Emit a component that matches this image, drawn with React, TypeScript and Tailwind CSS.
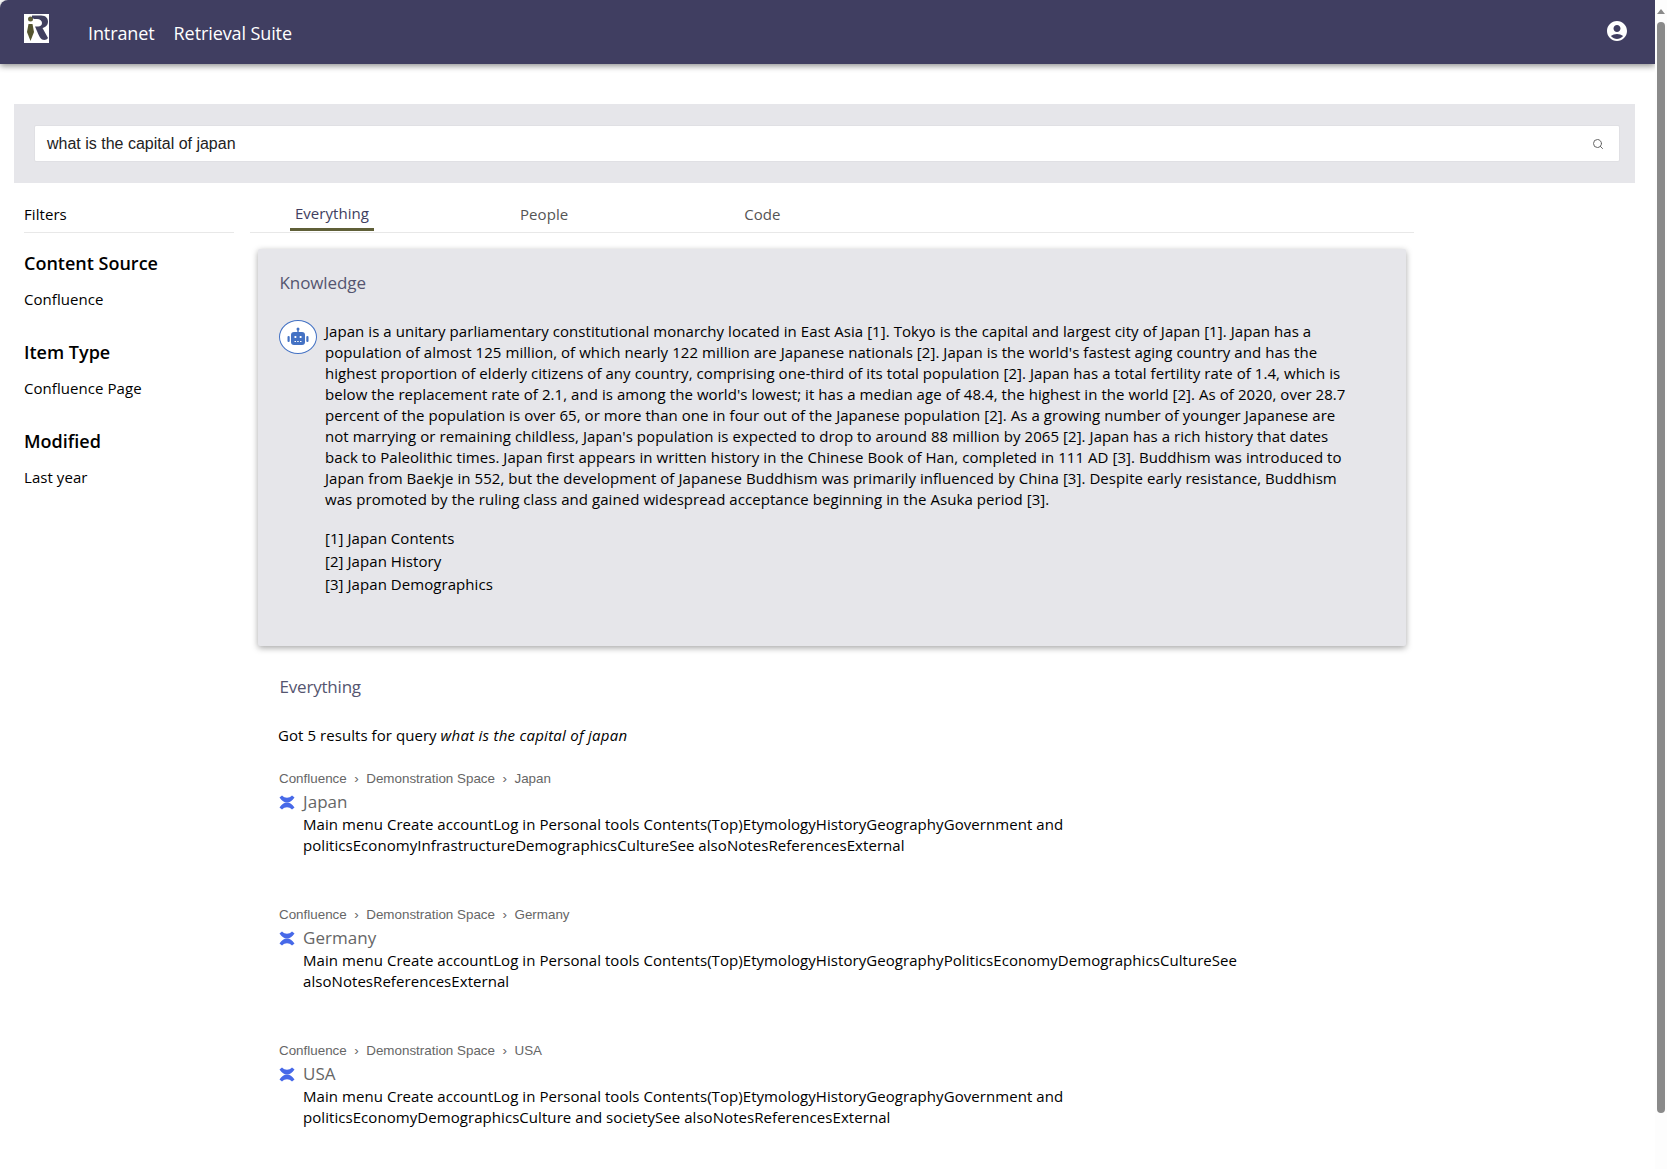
import React from "react";
import { Search } from "lucide-react";

const font = "font-['Open_Sans','Noto_Sans',sans-serif]";

const answer =
  "Japan is a unitary parliamentary constitutional monarchy located in East Asia [1]. Tokyo is the capital and largest city of Japan [1]. Japan has a population of almost 125 million, of which nearly 122 million are Japanese nationals [2]. Japan is the world's fastest aging country and has the highest proportion of elderly citizens of any country, comprising one-third of its total population [2]. Japan has a total fertility rate of 1.4, which is below the replacement rate of 2.1, and is among the world's lowest; it has a median age of 48.4, the highest in the world [2]. As of 2020, over 28.7 percent of the population is over 65, or more than one in four out of the Japanese population [2]. As a growing number of younger Japanese are not marrying or remaining childless, Japan's population is expected to drop to around 88 million by 2065 [2]. Japan has a rich history that dates back to Paleolithic times. Japan first appears in written history in the Chinese Book of Han, completed in 111 AD [3]. Buddhism was introduced to Japan from Baekje in 552, but the development of Japanese Buddhism was primarily influenced by China [3]. Despite early resistance, Buddhism was promoted by the ruling class and gained widespread acceptance beginning in the Asuka period [3].";

const results = [
  {
    title: "Japan",
    lines: [
      "Main menu Create accountLog in Personal tools Contents(Top)EtymologyHistoryGeographyGovernment and",
      "politicsEconomyInfrastructureDemographicsCultureSee alsoNotesReferencesExternal",
    ],
  },
  {
    title: "Germany",
    lines: [
      "Main menu Create accountLog in Personal tools Contents(Top)EtymologyHistoryGeographyPoliticsEconomyDemographicsCultureSee",
      "alsoNotesReferencesExternal",
    ],
  },
  {
    title: "USA",
    lines: [
      "Main menu Create accountLog in Personal tools Contents(Top)EtymologyHistoryGeographyGovernment and",
      "politicsEconomyDemographicsCulture and societySee alsoNotesReferencesExternal",
    ],
  },
];

const filters = [
  { heading: "Content Source", value: "Confluence" },
  { heading: "Item Type", value: "Confluence Page" },
  { heading: "Modified", value: "Last year" },
];

const Logo = () => (
  <svg width="25" height="29" viewBox="0 0 25 29" className="shrink-0">
    <rect width="25" height="29" fill="#fff" />
    <circle cx="6.500" cy="5" r="2.500" fill="#5f5f38" />
    <path d="M4.500 10h4l1.500 8-3.500 9-3.500-9z" fill="#55552f" />
    <path
      d="M8 1.500h9c5 0 7 3 7 6 0 4-3 6-5.500 6.500l5.500 10c-1 2-4 2.500-6 1.500-3-2-5-9-7-13h3c2.500 0 4-1.500 4-3.500s-2-4-5-4c-2 0-3.500 0-5-1z"
      fill="#41405f"
    />
  </svg>
);

const ConfluenceIcon = () => (
  <svg width="16" height="15" viewBox="0 0 16 15" className="shrink-0">
    <path d="M0.500 2.500L3 0.500C6 3.500 10 3.500 13 0.500L15.500 2.500C13 6 11 7.500 8 7.500C5 7.500 3 6 0.500 2.500Z" fill="#4769e8" />
    <path d="M0.500 12.500L3 14.500C6 11.500 10 11.500 13 14.500L15.500 12.500C13 9 11 7.500 8 7.500C5 7.500 3 9 0.500 12.500Z" fill="#4769e8" />
  </svg>
);

const RobotIcon = () => (
  <svg width="22" height="20" viewBox="0 0 22 20" fill="#4472c4">
    <circle cx="11" cy="2" r="1.500" />
    <rect x="10.300" y="2" width="1.400" height="3" />
    <rect x="4" y="5" width="14" height="13" rx="3" />
    <rect x="0.500" y="9" width="2.200" height="6" rx="1" />
    <rect x="19.300" y="9" width="2.200" height="6" rx="1" />
    <rect x="7.500" y="9" width="1.800" height="2" fill="#fff" />
    <rect x="12.700" y="9" width="1.800" height="2" fill="#fff" />
    <rect x="7.500" y="14" width="1.500" height="1" fill="#fff" />
    <rect x="10.200" y="14" width="1.500" height="1" fill="#fff" />
    <rect x="13" y="14" width="1.500" height="1" fill="#fff" />
  </svg>
);

const UserIcon = () => (
  <svg width="24" height="24" viewBox="0 0 24 24" fill="#fff">
    <path d="M12 2C6.480 2 2 6.480 2 12s4.480 10 10 10 10-4.480 10-10S17.520 2 12 2zm0 4c1.930 0 3.500 1.570 3.500 3.500S13.930 13 12 13s-3.500-1.570-3.500-3.500S10.070 6 12 6zm0 14c-2.030 0-4.430-.82-6.140-2.880C7.550 15.800 9.680 15 12 15s4.450.8 6.140 2.120C16.430 19.180 14.030 20 12 20z" />
  </svg>
);

const Scrollbar = () => (
  <div className="w-[12px] shrink-0 bg-[#fdfdfd] flex flex-col items-center">
    <div className="h-[22px] flex items-start pt-[9px]">
      <div className="w-0 h-0 border-x-[4px] border-x-transparent border-b-[5px] border-b-[#8a8a8a]" />
    </div>
    <div className="w-[8px] h-[1091px] bg-[#8a8a8a] rounded-[4px]" />
  </div>
);

export default function App() {
  return (
    <div className={`${font} flex h-[1169px] overflow-hidden bg-white text-[15px] leading-[21px] tracking-[0.06px] text-black`}>
      <div className="flex-1 min-w-0 overflow-hidden">
        <header className="h-16 bg-[#403e61] rounded-tl-lg shadow-[0_2px_6px_rgba(0,0,0,0.45)] flex items-center pl-6 pr-[26px] text-white relative">
          <div className="self-start pt-[14px]">
            <Logo />
          </div>
          <nav className="flex gap-[19px] ml-[39px] mt-[3px] text-[18px] tracking-[-0.1px]">
            <span>Intranet</span>
            <span>Retrieval Suite</span>
          </nav>
          <div className="ml-auto -mt-[3px]">
            <UserIcon />
          </div>
        </header>

        <div className="mt-10 ml-[14px] mr-5 h-[79px] bg-[#e6e6ea] pl-[20px] pr-[15px] pt-[21px]">
          <div className="h-[37px] bg-white rounded-[2px] border border-[#e0e0e4] flex items-center pl-3 pr-[15px] font-['Liberation_Sans',sans-serif] text-[16px] tracking-normal text-[#222]">
            <span className="flex-1">what is the capital of japan</span>
            <Search size={12} strokeWidth={2} className="text-[#666]" />
          </div>
        </div>

        <div className="flex pl-6 mt-[10px]">
          <aside className="w-[210px] shrink-0">
            <div className="h-[40px] flex items-center border-b border-[#e8e8e8] pt-[3px]">Filters</div>
            <div className="pt-[16px]">
              {filters.map((f) => (
                <div key={f.heading} className="mb-[28px]">
                  <h3 className="text-[18px] leading-[28px] font-semibold tracking-normal">{f.heading}</h3>
                  <p className="mt-[12px]">{f.value}</p>
                </div>
              ))}
            </div>
          </aside>

          <main className="ml-4 w-[1164px] shrink-0">
            <div className="h-[40px] flex items-end border-b border-[#e8e8e8] text-[#555]">
              <div className="ml-[40px] mb-[1px] w-[84px] h-[40px] flex items-center justify-center border-b-[3px] border-[#5f5f38] text-[#403e61] pt-[8px]">
                Everything
              </div>
              <div className="ml-[146px] h-[40px] flex items-center pt-[4px]">People</div>
              <div className="ml-[176px] h-[40px] flex items-center pt-[4px]">Code</div>
            </div>

            <section className="mt-[16px] ml-2 w-[1148px] h-[397px] bg-[#e6e6ea] rounded-[2px] shadow-[0_2px_6px_rgba(0,0,0,0.35)] pt-[22px] pl-[21px]">
              <h2 className="text-[17px] leading-[24px] tracking-[-0.1px] pl-[0.5px] text-[#555570]">Knowledge</h2>
              <div className="flex mt-[23px]">
                <div className="w-[38px] h-[34px] rounded-[50%] border border-[#4472c4] bg-white flex items-center justify-center shrink-0 mt-[2px]">
                  <RobotIcon />
                </div>
                <div className="ml-[8px] w-[1030px] pt-[3px]">
                  <p>{answer}</p>
                  <ul className="mt-[17px] leading-[23px]">
                    <li>[1] Japan Contents</li>
                    <li>[2] Japan History</li>
                    <li>[3] Japan Demographics</li>
                  </ul>
                </div>
              </div>
            </section>

            <section className="ml-[29px] mt-[29px]">
              <h2 className="text-[17px] leading-[24px] tracking-[-0.2px] pl-[0.5px] text-[#555570]">Everything</h2>
              <p className="mt-[26px] mb-[24px] -ml-[1px]">
                Got 5 results for query <em className="tracking-[0.25px]">what is the capital of japan</em>
              </p>
              {results.map((r) => (
                <article key={r.title} className="h-[136px]">
                  <div className="flex items-center text-[13.4px] leading-[18px] tracking-normal text-[#666] font-['Liberation_Sans',sans-serif]">
                    <span>Confluence</span>
                    <span className="mx-[7.5px]">›</span>
                    <span>Demonstration Space</span>
                    <span className="mx-[7.5px]">›</span>
                    <span>{r.title}</span>
                  </div>
                  <div className="flex items-center gap-[8px] mt-[2px] text-[17px] leading-[24px] text-[#666]">
                    <ConfluenceIcon />
                    <span>{r.title}</span>
                  </div>
                  <div className="pl-[24px]">
                    {r.lines.map((l) => (
                      <div key={l}>{l}</div>
                    ))}
                  </div>
                </article>
              ))}
            </section>
          </main>
        </div>
      </div>
      <Scrollbar />
    </div>
  );
}
